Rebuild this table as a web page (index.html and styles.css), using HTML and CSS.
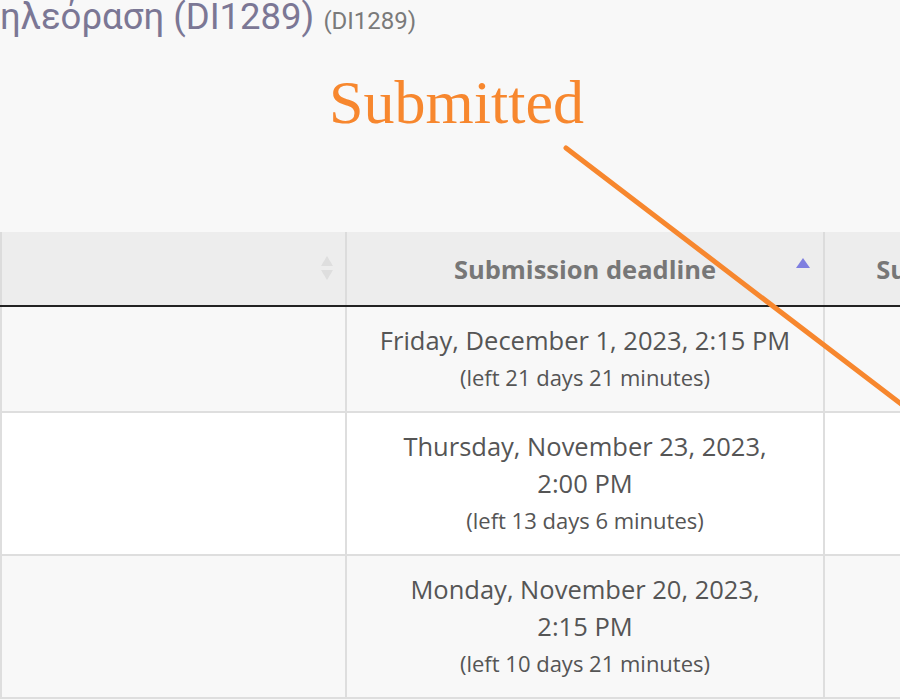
FILE: index.html
```html
<!DOCTYPE html>
<html>
<head>
<meta charset="utf-8">
<link rel="stylesheet" href="styles.css">
</head>
<body>
<div class="page">
  <h2 class="course-title">ηλεόραση (DI1289) <span class="course-code">(DI1289)</span></h2>
  <div class="stamp">Submitted</div>
  <table class="assign-table">
    <colgroup>
      <col class="col-name">
      <col class="col-deadline">
      <col class="col-sub">
    </colgroup>
    <thead>
      <tr>
        <th class="sortable">
          <span class="sort-both">
            <svg width="14" height="26" viewBox="0 0 14 26"><path d="M7 1 L13 11 L1 11 Z" fill="#dedede"/><path d="M7 25 L13 15 L1 15 Z" fill="#dedede"/></svg>
          </span>
        </th>
        <th class="sortable">Submission deadline
          <span class="sort-asc">
            <svg width="14" height="10" viewBox="0 0 14 10"><path d="M7 0 L14 10 L0 10 Z" fill="#7f7fe0"/></svg>
          </span>
        </th>
        <th>Submission</th>
      </tr>
    </thead>
    <tbody>
      <tr class="odd">
        <td></td>
        <td class="deadline"><div>Friday, December 1, 2023, 2:15&nbsp;PM</div><div class="left">(left 21 days 21 minutes)</div></td>
        <td></td>
      </tr>
      <tr class="even">
        <td></td>
        <td class="deadline"><div>Thursday, November 23, 2023, 2:00&nbsp;PM</div><div class="left">(left 13 days 6 minutes)</div></td>
        <td></td>
      </tr>
      <tr class="odd">
        <td></td>
        <td class="deadline"><div>Monday, November 20, 2023, 2:15&nbsp;PM</div><div class="left">(left 10 days 21 minutes)</div></td>
        <td></td>
      </tr>
    </tbody>
  </table>
  <svg class="arrow" width="900" height="700" viewBox="0 0 900 700"><line x1="566" y1="148" x2="905" y2="407" stroke="#f7872e" stroke-width="5" stroke-linecap="round"/></svg>
</div>
</body>
</html>
```

FILE: styles.css
```css
html, body {
  margin: 0;
  padding: 0;
  background: #f8f8f8;
  overflow: hidden;
}
.page {
  position: relative;
  width: 900px;
  height: 700px;
  overflow: hidden;
}
.course-title {
  margin: 0;
  font-family: Roboto, "Noto Sans", sans-serif;
  font-weight: 400;
  font-size: 36.5px;
  line-height: 44px;
  color: #7b7795;
  white-space: nowrap;
  margin-top: -5px;
}
.course-code {
  font-size: 24px;
  color: #7a7a7a;
}
.stamp {
  font-family: "Liberation Serif", "Times New Roman", serif;
  font-size: 62px;
  line-height: 68px;
  color: #f7872e;
  padding-left: 329px;
  margin-top: 25px;
  height: 164px;
}
.assign-table {
  border-collapse: collapse;
  table-layout: fixed;
  width: 1073px;
  font-family: "Open Sans", sans-serif;
  color: #555;
}
.col-name { width: 345px; }
.col-deadline { width: 478px; }
.col-sub { width: 250px; }
.assign-table th {
  position: relative;
  background: #ededed;
  height: 73px;
  padding: 0 20px;
  font-size: 25.5px;
  font-weight: 700;
  color: #777;
  text-align: center;
  white-space: nowrap;
  border-left: 2px solid #dcdcdc;
  border-right: 2px solid #dcdcdc;
  border-bottom: 2px solid #222;
}
.assign-table td {
  border: 2px solid #dedede;
  padding: 15px 20px 15px;
  text-align: center;
  font-size: 25.5px;
  line-height: 37px;
}
.assign-table tr.odd td { background: #f8f8f8; }
.assign-table tr.even td { background: #ffffff; }
.deadline .left {
  font-size: 22px;
}
.sort-both {
  position: absolute;
  right: 11px;
  top: 23px;
  line-height: 0;
}
.sort-asc {
  position: absolute;
  right: 13px;
  top: 26px;
  line-height: 0;
}
.arrow {
  position: absolute;
  left: 0;
  top: 0;
  pointer-events: none;
}
```
